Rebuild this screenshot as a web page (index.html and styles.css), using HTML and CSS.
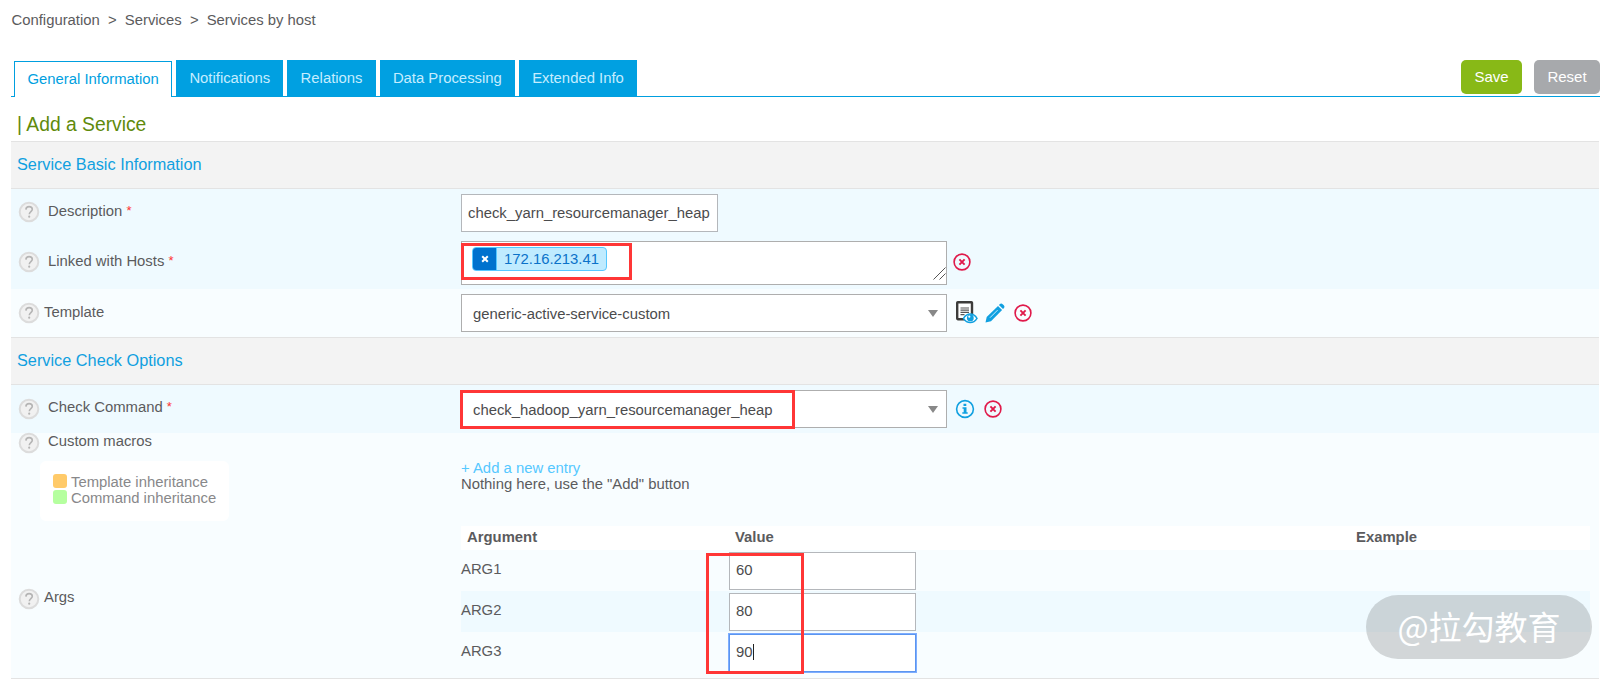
FILE: index.html
```html
<!DOCTYPE html>
<html lang="en">
<head>
    <meta charset="UTF-8">
    <title>Services by host</title>
    <link rel="stylesheet" href="styles.css">
</head>
<body>
    <!-- Shared icons -->
    <svg class="sprite" width="0" height="0">
        <symbol id="help" viewBox="0 0 22 22">
            <circle cx="11" cy="11" r="9.3" fill="#f1f1f1" stroke="#dcdcdc" stroke-width="2"/>
            <path d="M7.9 8.6c.1-2 1.4-3 3.2-3 1.9 0 3.2 1.1 3.2 2.7 0 2.2-3 2.5-3 5" fill="none" stroke="#b4b4b4" stroke-width="1.6"/>
            <circle cx="11.2" cy="15.7" r="1.1" fill="#b4b4b4"/>
        </symbol>
        <symbol id="remove" viewBox="0 0 18 18">
            <circle cx="9" cy="9" r="7.9" fill="none" stroke="#e0194a" stroke-width="1.6"/>
            <path d="M6.4 6.4l5.2 5.2M11.6 6.4l-5.2 5.2" stroke="#e0194a" stroke-width="1.9"/>
        </symbol>
        <symbol id="info" viewBox="0 0 20 20">
            <circle cx="10" cy="10" r="8.4" fill="none" stroke="#10a0e0" stroke-width="1.6"/>
            <path d="M8.5 4.7h2.8V7H8.5zM7.5 8.3h4v5h1.2v1.5H7.3v-1.5h1.4V9.8H7.5z" fill="#10a0e0"/>
        </symbol>
        <symbol id="view" viewBox="0 0 22 23">
            <rect x="1.2" y="1.2" width="14.8" height="17" rx=".6" fill="#fff" stroke="#3c3c3b" stroke-width="2.4"/>
            <path d="M4.5 7H13M4.5 9.2H13M4.5 11.4H13M4.5 13.6h4" stroke="#555" stroke-width="1.2"/>
            <path d="M7.5 17.3c3.5-5.6 10-5.6 13.500 0-3.500 5.600-10 5.600-13.500 0z" fill="#fff" stroke="#10a0e0" stroke-width="1.5"/>
            <circle cx="14.3" cy="16.9" r="3.4" fill="#10a0e0"/>
            <circle cx="13.3" cy="15.7" r="1.1" fill="#fff"/>
        </symbol>
        <symbol id="edit" viewBox="0 0 20 20">
            <path d="M.5 19.5L1.7 14 13 2.9 17.100 7 6 18.300z" fill="#10a0e0"/>
            <path d="M13.900 2l.8-.8c.9-.9 2.100-.9 3 0l1.100 1.100c.9.900.9 2.100 0 3l-.8.8z" fill="#10a0e0"/>
            <path d="M5 14.700l7.600-7.600" stroke="#c4edff" stroke-width="1"/>
        </symbol>
    </svg>

    <div class="breadcrumb">
        <span>Configuration</span><span class="sep">&gt;</span><span>Services</span><span class="sep">&gt;</span><span>Services by host</span>
    </div>

    <div class="toolbar">
        <ul class="tabs">
            <li class="tab active">General Information</li>
            <li class="tab">Notifications</li>
            <li class="tab">Relations</li>
            <li class="tab">Data Processing</li>
            <li class="tab">Extended Info</li>
        </ul>
        <div class="buttons">
            <button class="btn save">Save</button>
            <button class="btn reset">Reset</button>
        </div>
    </div>

    <h1 class="title">| Add a Service</h1>

    <div class="form">
        <h2 class="section">Service Basic Information</h2>
        <div class="row row-description dark">
            <div class="label"><svg class="help"><use href="#help"/></svg><span class="text wide">Description <sup>*</sup></span></div>
            <div class="field"><div class="input name-input">check_yarn_resourcemanager_heap</div></div>
        </div>
        <div class="row row-hosts dark">
            <div class="label"><svg class="help"><use href="#help"/></svg><span class="text wide">Linked with Hosts <sup>*</sup></span></div>
            <div class="field">
                <div class="hosts">
                    <div class="chip"><span class="chip-close"><svg width="8" height="8" viewBox="0 0 8 8"><path d="M1.2 1.2l5.6 5.6M6.8 1.2L1.2 6.8" stroke="#fff" stroke-width="2"/></svg></span><span class="chip-text">172.16.213.41</span></div>
                    <svg class="grip" width="13" height="13" viewBox="0 0 13 13"><path d="M.5 12.5l12-12M6.5 12.5l6-6" stroke="#555" stroke-width="1"/></svg>
                    <div class="mark mark-hosts"></div>
                </div>
                <svg class="icon remove first"><use href="#remove"/></svg>
            </div>
        </div>
        <div class="row row-template light">
            <div class="label"><svg class="help"><use href="#help"/></svg><span class="text">Template</span></div>
            <div class="field">
                <div class="select">generic-active-service-custom<span class="arrow"></span></div>
                <svg class="icon view"><use href="#view"/></svg>
                <svg class="icon edit"><use href="#edit"/></svg>
                <svg class="icon remove"><use href="#remove"/></svg>
            </div>
        </div>

        <h2 class="section">Service Check Options</h2>
        <div class="row row-command dark">
            <div class="label"><svg class="help"><use href="#help"/></svg><span class="text wide">Check Command <sup>*</sup></span></div>
            <div class="field">
                <div class="select">check_hadoop_yarn_resourcemanager_heap<span class="arrow"></span><div class="mark mark-command"></div></div>
                <svg class="icon info"><use href="#info"/></svg>
                <svg class="icon remove"><use href="#remove"/></svg>
            </div>
        </div>
        <div class="row row-macros light">
            <div class="macro-side">
                <div class="label"><svg class="help"><use href="#help"/></svg><span class="text wide">Custom macros</span></div>
                <div class="legend">
                    <div class="legend-item"><i class="swatch orange"></i>Template inheritance</div>
                    <div class="legend-item"><i class="swatch green"></i>Command inheritance</div>
                </div>
            </div>
            <div class="macro-main">
                <a class="add">+ Add a new entry</a>
                <div>Nothing here, use the "Add" button</div>
            </div>
        </div>
        <div class="row row-args light">
            <div class="label"><svg class="help"><use href="#help"/></svg><span class="text">Args</span></div>
            <div class="args">
                <div class="args-row args-head"><span>Argument</span><span>Value</span><span>Example</span></div>
                <div class="args-row"><span class="arg-name">ARG1</span><div class="input">60</div></div>
                <div class="args-row dark"><span class="arg-name">ARG2</span><div class="input">80</div></div>
                <div class="args-row"><span class="arg-name">ARG3</span><div class="input focus">90<i class="caret"></i></div></div>
                <div class="mark mark-args"></div>
            </div>
        </div>
    </div>

    <div class="watermark">@拉勾教育</div>
</body>
</html>
```
FILE: styles.css
```css
* {
    margin: 0;
    padding: 0;
    box-sizing: border-box;
}

body {
    position: relative;
    height: 680px;
    overflow: hidden;
    padding: 0 15px 0 11px;
    background: #fff;
    color: #5b5b5d;
    font-family: "Liberation Sans", Arial, sans-serif;
    font-size: 14.85px;
    line-height: 16px;
}

.sprite {
    position: absolute;
}

/* Breadcrumb */
.breadcrumb {
    height: 60px;
    padding: 12px 0 0 0.5px;
    display: flex;
}

.breadcrumb .sep {
    width: 25px;
    text-align: center;
}

/* Tabs and form buttons */
.toolbar {
    display: flex;
    justify-content: space-between;
    height: 37px;
    border-bottom: 1px solid #009fdf;
}

.tabs {
    display: flex;
    gap: 4px;
    padding-left: 3px;
    list-style: none;
}

.tab {
    height: 36px;
    padding: 0 13.2px;
    line-height: 36px;
    background: #00a0e1;
    color: #c5edff;
    white-space: nowrap;
}

.tab.active {
    height: 36px;
    margin-top: 1px;
    padding: 0 12.5px;
    border: 1px solid #009fdf;
    border-bottom: none;
    background: #fff;
    color: #009fdf;
    line-height: 34px;
}

.buttons {
    display: flex;
    gap: 12px;
}

.btn {
    height: 34px;
    padding-bottom: 2px;
    border: none;
    border-radius: 5px;
    color: #fff;
    font: 15px "Liberation Sans", Arial, sans-serif;
}

.save {
    width: 61px;
    background: #88b917;
}

.reset {
    width: 66px;
    background: #a7a9ac;
}

.title {
    height: 44px;
    padding: 16px 0 0 6px;
    color: #5f8a0b;
    font-size: 19.3px;
    font-weight: normal;
    line-height: 24px;
}

/* Form */
.form {
    width: 1588px;
    border-bottom: 1px solid #e3e3e3;
}

.section {
    height: 48px;
    padding-left: 6px;
    border: solid #e3e3e3;
    border-width: 1px 0;
    background: #f3f3f3;
    color: #10a0e0;
    font-size: 16.3px;
    font-weight: normal;
    line-height: 45px;
}

.row {
    display: flex;
}

.dark {
    background: #effaff;
}

.light {
    background: #f8fdff;
}

.row-description,
.row-template,
.row-command {
    height: 48px;
}

.row-hosts {
    height: 52px;
}

.label {
    display: flex;
    width: 450px;
    padding-left: 7px;
}

.row-description .label {
    padding-top: 12px;
}

.row-hosts .label {
    padding-top: 14px;
}

.row-template .label,
.row-command .label {
    padding-top: 13px;
}

.help {
    width: 22px;
    height: 22px;
}

.text {
    margin-left: 4px;
    line-height: 20px;
}

.row-command .text {
    line-height: 19px;
}

.row-macros .text {
    line-height: 17px;
}

.text.wide {
    margin-left: 8px;
}

.text sup {
    color: #f33;
    font-size: 13px;
    line-height: 0;
    vertical-align: 1px;
}

.field {
    display: flex;
    padding-top: 5px;
}

.row-hosts .field {
    padding-top: 4px;
}

.input {
    height: 38px;
    padding-left: 6px;
    border: 1px solid #b4b7bb;
    background: #fff;
    color: #4b4b4d;
    line-height: 36px;
    white-space: nowrap;
}

.name-input {
    width: 257px;
}

.select,
.hosts {
    position: relative;
    width: 486px;
    border: 1px solid #aeaeae;
    background: #fff;
}

.select {
    height: 38px;
    padding-left: 11px;
    color: #4b4b4d;
    line-height: 38px;
}

.hosts {
    height: 44px;
    padding: 5px 10px;
}

.arrow {
    position: absolute;
    right: 8px;
    top: 15px;
    border: 5.5px solid transparent;
    border-top: 7px solid #888;
    border-bottom: none;
}

.chip {
    display: flex;
    width: 135px;
    height: 24px;
    border: 1px solid #56c8ff;
    border-radius: 4px;
    overflow: hidden;
    background: #bfebff;
    color: #0b72c9;
}

.chip-close {
    display: flex;
    align-items: center;
    justify-content: center;
    width: 24px;
    border-right: 1px solid #56c8ff;
    background: #0072ce;
}

.chip-text {
    padding-left: 7px;
    line-height: 22px;
}

.grip {
    position: absolute;
    right: 0;
    bottom: 4px;
}

.icon {
    width: 18px;
    height: 18px;
    margin: 10px 0 0 9px;
}

.icon.first {
    margin: 12px 0 0 6px;
}

.icon.view {
    width: 22px;
    height: 23px;
    margin: 7px 0 0 9px;
}

.icon.edit {
    width: 20px;
    height: 20px;
    margin: 9px 0 0 7px;
}

.icon.info {
    width: 20px;
    height: 20px;
    margin: 9px 0 0 8px;
}

.icon.info + .remove {
    margin-left: 9px;
}

/* Custom macros */
.row-macros {
    height: 93px;
}

.macro-side .help {
    margin-top: -1px;
}

.legend {
    width: 189px;
    height: 60px;
    margin: 7px 0 0 29px;
    padding: 13px 0 0 13px;
    border-radius: 6px;
    background: #fff;
    color: #88888a;
}

.legend-item {
    display: flex;
    height: 16px;
    line-height: 16px;
}

.swatch {
    width: 14px;
    height: 14px;
    margin-right: 4px;
    border-radius: 3px;
}

.orange {
    background: #ffca69;
}

.green {
    background: #b5ff9f;
}

.macro-main {
    padding-top: 27px;
}

.add {
    display: block;
    color: #55c8ff;
}

/* Arguments */
.row-args {
    height: 152px;
}

.row-args .label {
    padding-top: 62px;
}

.row-args .text {
    line-height: 19px;
}

.args {
    position: relative;
    width: 1129px;
}

.args-row {
    display: grid;
    grid-template-columns: 268px 621px 1fr;
    height: 41px;
    padding-top: 2px;
}

.args-head {
    height: 24px;
    padding: 3px 0 0 6px;
    background: #fff;
    font-weight: bold;
}

.args-row .input {
    width: 187px;
    line-height: 35px;
}

.arg-name {
    line-height: 34px;
}

.args-row .focus {
    border-color: #5b95ef;
    box-shadow: 0 0 0 1px #7dadff;
}

.caret {
    display: inline-block;
    width: 1px;
    height: 16px;
    background: #222;
    vertical-align: -3px;
}

/* Highlight frames over the fields */
.mark {
    position: absolute;
    border: 3px solid #ff3636;
}

.mark-hosts {
    left: -1px;
    top: 1px;
    width: 171px;
    height: 37px;
}

.mark-command {
    left: -2px;
    top: -1px;
    width: 335px;
    height: 39px;
}

.mark-args {
    left: 245px;
    top: 27px;
    width: 98px;
    height: 121px;
}

.watermark {
    position: absolute;
    left: 1366px;
    top: 595px;
    width: 226px;
    height: 64px;
    border-radius: 32px;
    background: rgba(95, 98, 98, 0.25);
    color: #fff;
    font-family: "Noto Sans CJK SC", sans-serif;
    font-size: 33px;
    line-height: 62px;
    text-align: center;
}
```
